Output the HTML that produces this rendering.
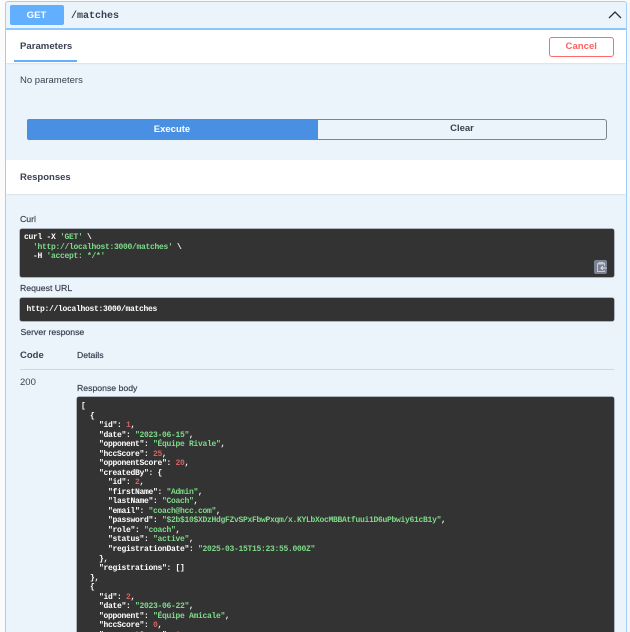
<!DOCTYPE html>
<html><head><meta charset="utf-8"><style>
html,body{margin:0;padding:0;width:630px;height:632px;overflow:hidden;background:#fbfbfb}
#w{position:absolute;left:0;top:0;width:630px;height:632px;overflow:hidden;font-family:"Liberation Sans",sans-serif;color:#3b4151;filter:blur(.35px)}
.a{position:absolute;white-space:pre}
.b{position:absolute}
.t{line-height:12px;font-size:8.7px;-webkit-text-stroke:.2px #3b4151}
.k{position:absolute;background:#333;border-radius:2px;box-shadow:0 0 0 .6px #8a8f98}
.m{font-family:"Liberation Mono",monospace;font-weight:bold;font-size:8px;letter-spacing:-.3px;color:#fff}
.s{color:#7fdb8a}.n{color:#d36363}
.h{font-size:9.5px;font-weight:bold;line-height:12px}
</style></head><body><div id="w">
<div class="b" style="left:5px;top:1px;width:622px;height:640px;background:#ebf3fb;border:1px solid #a3cff9;border-bottom:0;border-radius:3px;box-sizing:border-box"></div>
<div class="b" style="left:627px;top:3px;width:3px;height:629px;background:#f4f6f9"></div>
<div class="b" style="left:6px;top:28px;width:620px;height:1.5px;background:#8fc6fb"></div>
<div class="b" style="left:9.5px;top:5px;width:54px;height:20px;background:#61affe;border-radius:2px;color:#fff;font-weight:bold;font-size:9.6px;line-height:21px;text-align:center">GET</div>
<div class="a" style="left:71px;top:10.5px;font:bold 10px/12px 'Liberation Mono',monospace;color:#3b4151">/matches</div>
<svg class="b" style="left:607px;top:9px" width="16" height="12" viewBox="0 0 16 12"><path d="M2 9 L8 3 L14 9" fill="none" stroke="#2b2f38" stroke-width="1.3"/></svg>

<div class="b" style="left:6px;top:30px;width:620px;height:33px;background:#fff;box-shadow:0 1px 1px rgba(0,0,0,.07)"></div>
<div class="a h" style="left:20px;top:40.5px;font-size:9.6px">Parameters</div>
<div class="b" style="left:14px;top:59.5px;width:63px;height:2.5px;background:#61affe"></div>
<div class="b" style="left:549px;top:36.5px;width:64.5px;height:20px;box-sizing:border-box;border:1.5px solid #ff6a6a;border-radius:3px;color:#ff6060;font-weight:bold;font-size:9.6px;line-height:17.5px;text-align:center">Cancel</div>
<div class="a" style="left:20px;top:74.5px;font-size:9.5px;line-height:12px">No parameters</div>
<div class="b" style="left:26.5px;top:119px;width:291px;height:21px;background:#4990e2;border-radius:2px 0 0 2px;color:#fff;font-weight:bold;font-size:9.5px;line-height:21.5px;text-align:center">Execute</div>
<div class="b" style="left:317px;top:119px;width:290px;height:21px;box-sizing:border-box;border:1.7px solid #7d8492;border-radius:0 3px 3px 0;font-weight:bold;font-size:9.5px;line-height:18px;text-align:center">Clear</div>

<div class="b" style="left:6px;top:160px;width:620px;height:34px;background:#fff;box-shadow:0 1px 1px rgba(0,0,0,.07)"></div>
<div class="a h" style="left:20px;top:172px">Responses</div>

<div class="a t" style="left:20px;top:213px">Curl</div>
<div class="k" style="left:20px;top:228.5px;width:594px;height:48.5px"></div>
<div class="a m" style="left:24px;top:233px;line-height:9.6px">curl -X <span class="s">'GET'</span> \
  <span class="s">'http://localhost:3000/matches'</span> \
  -H <span class="s">'accept: */*'</span></div>
<div class="b" style="left:593.5px;top:260px;width:13.5px;height:14px;background:#7d8293;border-radius:2px"></div>
<svg class="b" style="left:593.5px;top:260px" width="14" height="14" viewBox="0 0 14 14"><path d="M5 2.5h4v1.5H5z M3.5 3.5h7v2.5M3.5 3.5v8h7v-1" fill="none" stroke="#c9cbd4" stroke-width="1"/><path d="M12.5 8H7M8.8 6.2 7 8l1.8 1.8" fill="none" stroke="#e4e4e8" stroke-width="1"/></svg>

<div class="a t" style="left:20px;top:282px">Request URL</div>
<div class="k" style="left:20px;top:297.5px;width:594px;height:23.5px"></div>
<div class="a m" style="left:26.5px;top:304.5px;line-height:10px">http://localhost:3000/matches</div>

<div class="a t" style="left:20.5px;top:326px;">Server response</div>
<div class="a h" style="left:20px;top:350px">Code</div>
<div class="a t" style="left:77px;top:348.5px">Details</div>
<div class="b" style="left:20px;top:369px;width:594px;height:1px;background:#cfd6de"></div>
<div class="a" style="left:20px;top:376.5px;font-size:9.5px;line-height:12px">200</div>
<div class="a t" style="left:77px;top:382px">Response body</div>
<div class="k" style="left:76.5px;top:397px;width:537.5px;height:240px"></div>
<div class="a m" style="left:81px;top:402px;line-height:9.53px">[
  {
    "id": <span class="n">1</span>,
    "date": <span class="s">"2023-06-15"</span>,
    "opponent": <span class="s">"Équipe Rivale"</span>,
    "hccScore": <span class="n">25</span>,
    "opponentScore": <span class="n">20</span>,
    "createdBy": {
      "id": <span class="n">2</span>,
      "firstName": <span class="s">"Admin"</span>,
      "lastName": <span class="s">"Coach"</span>,
      "email": <span class="s">"coach@hcc.com"</span>,
      "password": <span class="s">"$2b$10$XDzHdgFZvSPxFbwPxqm/x.KYLbXocMBBAtfuui1D6uPbwiy61cB1y"</span>,
      "role": <span class="s">"coach"</span>,
      "status": <span class="s">"active"</span>,
      "registrationDate": <span class="s">"2025-03-15T15:23:55.000Z"</span>
    },
    "registrations": []
  },
  {
    "id": <span class="n">2</span>,
    "date": <span class="s">"2023-06-22"</span>,
    "opponent": <span class="s">"Équipe Amicale"</span>,
    "hccScore": <span class="n">0</span>,
    "opponentScore": <span class="n">0</span>,</div>
</div></body></html>
